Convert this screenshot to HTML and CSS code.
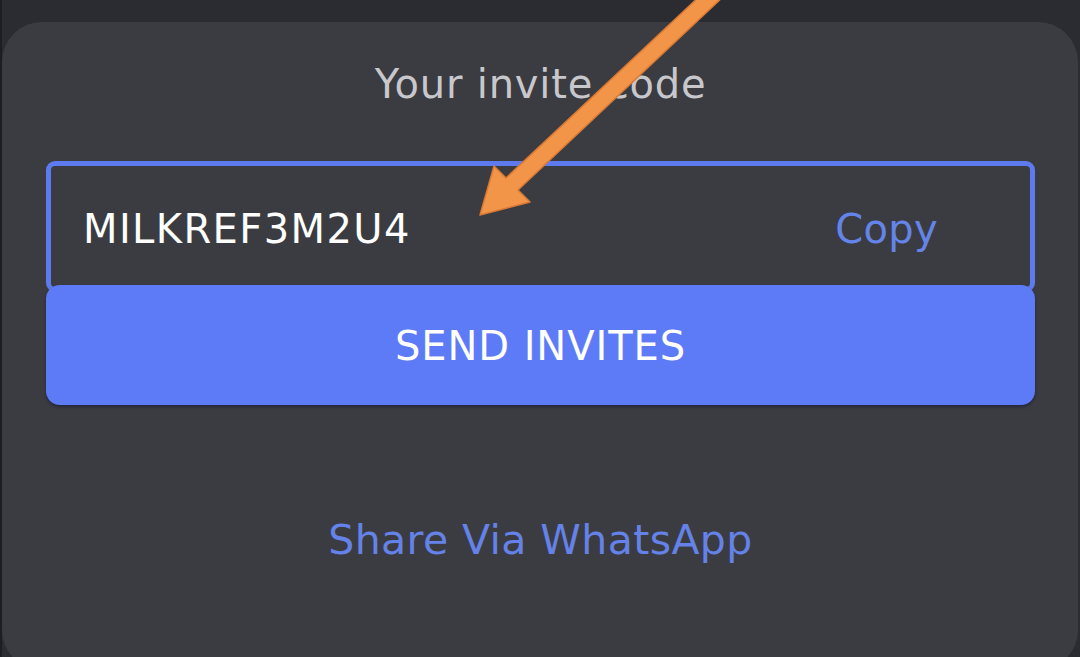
FILE: index.html
```html
<!DOCTYPE html>
<html>
<head>
    <title>Invite Friends</title>
    <link rel="stylesheet" href="styles.css">
</head>
<body>
    <div class="screen">
        <div class="sheet">
            <h2 class="invite-title">Your invite code</h2>
            <div class="code-box">
                <span class="code-text">MILKREF3M2U4</span>
                <span class="copy-link">Copy</span>
            </div>
            <button class="send-button">SEND INVITES</button>
            <p class="share-link">Share Via WhatsApp</p>
        </div>

        <!-- annotation arrow drawn on top of the screenshot -->
        <svg class="annotation" viewBox="0 0 1080 657" width="1080" height="657">
            <polygon points="480,215 494,166 506,178 702,-6 726,-6 518,190 530,202"
                     fill="#f39548" stroke="#d97a35" stroke-width="1.5" stroke-linejoin="round"/>
        </svg>
    </div>
</body>
</html>
```

FILE: styles.css
```css
html, body {
    margin: 0;
    height: 100%;
    overflow: hidden;
}
body {
    font-family: "DejaVu Sans", sans-serif;
    background-color: #2a2c32;
}
.screen {
    position: relative;
    height: 657px;
    border-left: 2px solid #1d1e21;
    padding-top: 22px;
    box-sizing: border-box;
}
.sheet {
    width: 1076px;
    height: 648px;
    background-color: #3b3c41;
    border-radius: 40px;
    padding: 38px 43px 0 44px;
    box-sizing: border-box;
    display: flex;
    flex-direction: column;
}
.invite-title {
    margin: 0;
    font-size: 40px;
    font-weight: normal;
    line-height: 48px;
    letter-spacing: 0.8px;
    text-align: center;
    color: #c8c8cc;
}
.code-box {
    margin-top: 53px;
    height: 131px;
    border: 5px solid #5d7bee;
    border-radius: 9px;
    box-sizing: border-box;
    display: flex;
    align-items: center;
    justify-content: space-between;
    padding: 4px 92px 0 32px;
}
.code-text {
    font-size: 40px;
    letter-spacing: 1.4px;
    color: #ffffff;
}
.copy-link {
    font-size: 40px;
    letter-spacing: 0.3px;
    color: #6584ea;
}
.send-button {
    position: relative;
    margin-top: -7px;
    height: 120px;
    border: none;
    border-radius: 14px;
    background-color: #5e7bf7;
    box-shadow: 0 2px 3px rgba(20, 24, 60, 0.6);
    font-family: "DejaVu Sans", sans-serif;
    font-size: 40px;
    letter-spacing: 0.9px;
    color: #ffffff;
    padding-top: 2px;
}
.share-link {
    margin: 111px 0 0;
    font-size: 41px;
    line-height: 48px;
    letter-spacing: 0.4px;
    text-align: center;
    color: #6482e8;
}
.annotation {
    position: absolute;
    left: -2px;
    top: 0;
    pointer-events: none;
}
```
